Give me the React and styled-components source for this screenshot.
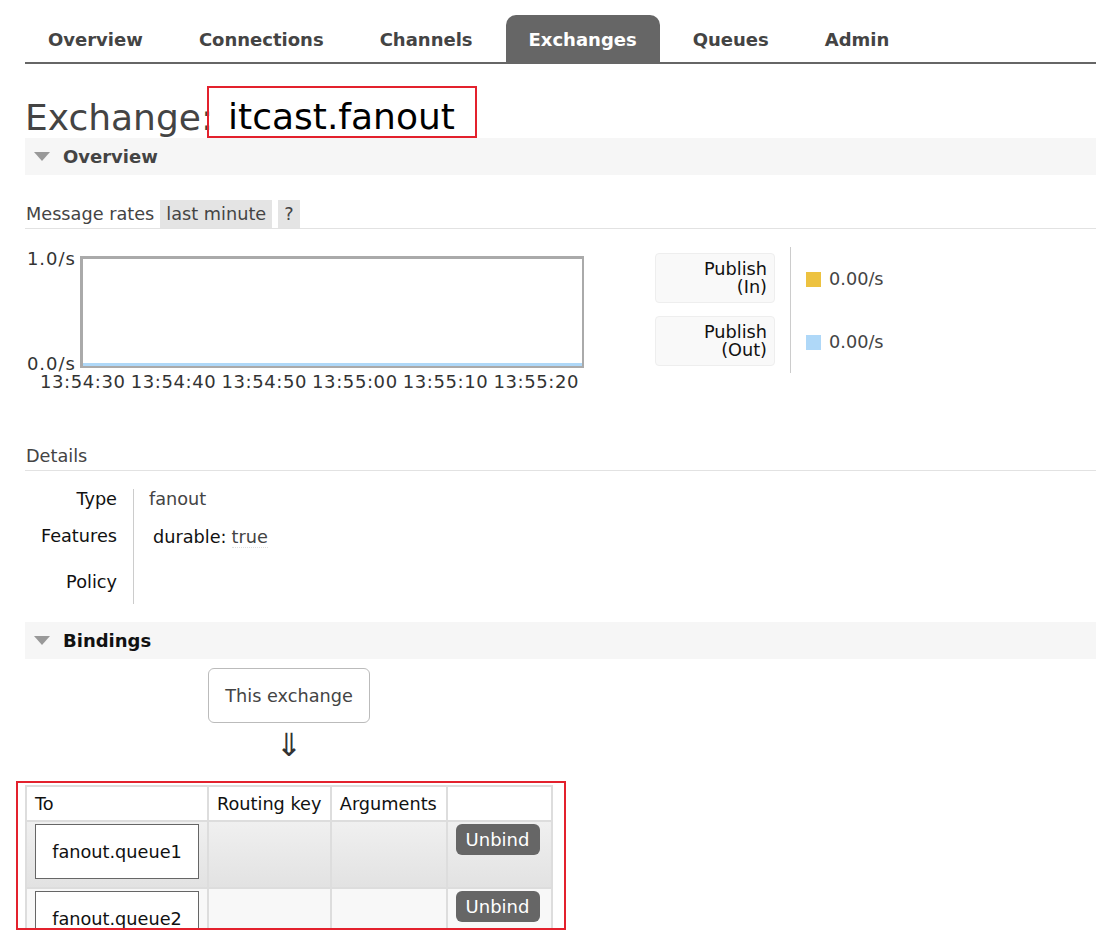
import React from 'react'
import styled, { createGlobalStyle } from 'styled-components'

const Global = createGlobalStyle`
  html, body { margin: 0; padding: 0; background: #fff; }
  body { font-family: "DejaVu Sans", Verdana, sans-serif; font-size: 17.7px; color: #444; }
  * { box-sizing: border-box; }
`

const Page = styled.div`
  padding: 15px 0 0 25px;
  width: 1096px;
  overflow: hidden;
`

const Nav = styled.ul`
  list-style: none;
  margin: 0;
  padding: 0;
  display: flex;
  border-bottom: 2px solid #666;
  height: 49px;
`

const Tab = styled.li`
  height: 47px;
  padding: 2px 23px 0;
  margin-right: 10px;
  display: flex;
  align-items: center;
  font-weight: bold;
  font-size: 18px;
  color: ${p => (p.$active ? '#fff' : '#444')};
  background: ${p => (p.$active ? '#666' : 'transparent')};
  border-radius: 10px 10px 0 0;
`

const Title = styled.h1`
  margin: 22px 0 0 0;
  font-weight: normal;
  font-size: 36px;
  color: #444;
  display: flex;
  align-items: flex-start;
  height: 52px;
`

const TitleLabel = styled.span`
  line-height: 52px;
  padding-top: 6px;
`

const Marked = styled.span`
  color: #000;
  border: 2px solid #e3212d;
  height: 52px;
  display: block;
  line-height: 52px;
  padding: 3px 20px 0 19px;
  margin-left: -6px;
`

const SectionHead = styled.div`
  background: #f6f6f6;
  height: 37px;
  display: flex;
  align-items: center;
  font-weight: bold;
  font-size: 18px;
  color: ${p => (p.$dark ? '#111' : '#444')};
  padding-left: 9px;
  margin-top: ${p => p.$top || 0}px;
`

const Triangle = styled.span`
  width: 0;
  height: 0;
  border-left: 8px solid transparent;
  border-right: 8px solid transparent;
  border-top: 9px solid #999;
  margin-right: 13px;
`

const SubHead = styled.div`
  display: flex;
  align-items: center;
  border-bottom: 1px solid #e2e2e2;
  color: #444;
  height: 30px;
  margin-top: ${p => p.$top}px;
  padding-left: 1px;
  gap: 6px;
`

const Pill = styled.span`
  background: #e4e4e4;
  height: 28px;
  display: inline-flex;
  align-items: center;
  padding: 0 6px;
`

const RatesRow = styled.div`
  display: flex;
  margin-top: 27px;
`

const ChartArea = styled.div`
  width: 560px;
  display: grid;
  grid-template-columns: 55px 505px;
  grid-template-rows: 112px auto;
`

const YAxis = styled.div`
  display: flex;
  flex-direction: column;
  justify-content: space-between;
  align-items: flex-end;
  padding-right: 4px;
  font-size: 18px;
  letter-spacing: 1px;
  color: #333;
  line-height: 16px;
  margin-top: -5px;
  margin-bottom: -4px;
`

const Plot = styled.div`
  width: 504px;
  height: 112px;
  border: 3px solid #aaa;
  border-width: 3px 2px 2px 3px;
  display: flex;
  align-items: flex-end;
  background: #fff;
`

const BaseLine = styled.div`
  width: 100%;
  height: 3px;
  background: #afd8f8;
`

const XAxis = styled.div`
  grid-column: 1 / 3;
  display: flex;
  margin-top: 4px;
  padding-left: 15px;
  font-size: 18px;
  color: #333;
  line-height: 20px;
  letter-spacing: 0.6px;
  white-space: nowrap;
`

const Tick = styled.span`
  width: 90.7px;
  flex: none;
`

const Legend = styled.div`
  margin-left: 70px;
  margin-top: -9px;
  display: flex;
  align-self: flex-start;
`

const LegendLabels = styled.div`
  display: flex;
  flex-direction: column;
  gap: 13px;
  padding: 6px 15px 0 0;
  border-right: 1px solid #ccc;
  height: 126px;
`

const LegendLabel = styled.div`
  width: 120px;
  height: 50px;
  background: #f9f9f9;
  border: 1px solid #eee;
  border-radius: 4px;
  text-align: right;
  padding: 6px 7px 0 0;
  line-height: 18px;
  color: #111;
`

const LegendValues = styled.div`
  display: flex;
  flex-direction: column;
  padding: 23px 0 0 15px;
  gap: 45px;
`

const Value = styled.div`
  display: flex;
  align-items: center;
  gap: 8px;
  color: #444;
  height: 18px;
`

const Swatch = styled.span`
  width: 15px;
  height: 15px;
  background: ${p => p.$color};
`

const Facts = styled.div`
  display: grid;
  grid-template-columns: 109px auto;
  margin-top: 18px;
  width: 400px;
`

const FactLabel = styled.div`
  text-align: right;
  padding-right: 16px;
  color: #111;
  border-right: 1px solid #ccc;
  height: ${p => p.$h}px;
  padding-top: ${p => p.$pt}px;
  line-height: 20px;
`

const FactValue = styled.div`
  padding-left: ${p => p.$pl}px;
  height: ${p => p.$h}px;
  padding-top: ${p => p.$pt}px;
  line-height: 20px;
  color: ${p => p.$c || '#444'};
`

const Dotted = styled.span`
  color: #444;
  border-bottom: 1px dotted #ddd;
  margin-left: 5px;
  display: inline-block;
  padding-top: 3px;
`

const Flow = styled.div`
  width: 528px;
  display: flex;
  flex-direction: column;
  align-items: center;
`

const ExBox = styled.div`
  margin-top: 9px;
  width: 162px;
  height: 55px;
  border: 1px solid #bbb;
  border-radius: 6px;
  display: flex;
  align-items: center;
  justify-content: center;
  color: #444;
`

const Arrow = styled.div`
  font-size: 32px;
  line-height: 40px;
  color: #333;
  margin-top: 2px;
`

const Annot = styled.div`
  margin: 16px 0 0 -9px;
  width: 550px;
  height: 149px;
  border: 2px solid #e3212d;
  padding: 2px 0 0 7px;
  overflow: hidden;
`

const Table = styled.table`
  border-collapse: collapse;
  width: 528px;
  color: #111;
  white-space: nowrap;
`

const Th = styled.th`
  font-weight: normal;
  text-align: left;
  border: 2px solid #ddd;
  height: 35px;
  padding: 0 8px;
  width: ${p => p.$w}px;
`

const Tr = styled.tr`
  background: ${p => (p.$alt ? 'linear-gradient(#f0f0f0, #e2e2e2)' : '#f8f8f8')};
`

const Td = styled.td`
  border: 2px solid #ddd;
  height: 67px;
  vertical-align: top;
  padding: 2px 8px;
`

const QueueBox = styled.div`
  width: 164px;
  height: 55px;
  background: #fff;
  border: 1px solid #666;
  display: flex;
  align-items: center;
  justify-content: center;
  color: #111;
`

const Unbind = styled.button`
  background: #666;
  color: #fff;
  border: none;
  border-radius: 6px;
  font-family: inherit;
  font-size: 18px;
  height: 31px;
  width: 84px;
  padding: 0;
`

export default function App() {
  const tabs = ['Overview', 'Connections', 'Channels', 'Exchanges', 'Queues', 'Admin']
  const ticks = ['13:54:30', '13:54:40', '13:54:50', '13:55:00', '13:55:10', '13:55:20']
  return (
    <>
      <Global />
      <Page>
        <Nav>
          {tabs.map(t => (
            <Tab key={t} $active={t === 'Exchanges'}>{t}</Tab>
          ))}
        </Nav>
        <Title>
          <TitleLabel>Exchange:</TitleLabel>
          <Marked>itcast.fanout</Marked>
        </Title>
        <SectionHead><Triangle />Overview</SectionHead>
        <SubHead $top={24}>
          Message rates
          <Pill>last minute</Pill>
          <Pill>?</Pill>
        </SubHead>
        <RatesRow>
          <ChartArea>
            <YAxis><span>1.0/s</span><span>0.0/s</span></YAxis>
            <Plot><BaseLine /></Plot>
            <XAxis>
              {ticks.map(t => <Tick key={t}>{t}</Tick>)}
            </XAxis>
          </ChartArea>
          <Legend>
            <LegendLabels>
              <LegendLabel>Publish<br />(In)</LegendLabel>
              <LegendLabel>Publish<br />(Out)</LegendLabel>
            </LegendLabels>
            <LegendValues>
              <Value><Swatch $color="#edc240" />0.00/s</Value>
              <Value><Swatch $color="#afd8f8" />0.00/s</Value>
            </LegendValues>
          </Legend>
        </RatesRow>
        <SubHead $top={49}>Details</SubHead>
        <Facts>
          <FactLabel $h={30} $pt={0}>Type</FactLabel>
          <FactValue $h={30} $pt={0} $pl={15}>fanout</FactValue>
          <FactLabel $h={42} $pt={7}>Features</FactLabel>
          <FactValue $h={42} $pt={5} $pl={19} $c="#111">durable:<Dotted>true</Dotted></FactValue>
          <FactLabel $h={43} $pt={11}>Policy</FactLabel>
          <FactValue $h={43} $pt={11} $pl={15} />
        </Facts>
        <SectionHead $top={18} $dark><Triangle />Bindings</SectionHead>
        <Flow>
          <ExBox>This exchange</ExBox>
          <Arrow>⇓</Arrow>
        </Flow>
        <Annot>
          <Table>
            <thead>
              <tr>
                <Th $w={182}>To</Th>
                <Th $w={123}>Routing key</Th>
                <Th $w={116}>Arguments</Th>
                <Th $w={107}></Th>
              </tr>
            </thead>
            <tbody>
              <Tr $alt>
                <Td><QueueBox>fanout.queue1</QueueBox></Td>
                <Td />
                <Td />
                <Td><Unbind>Unbind</Unbind></Td>
              </Tr>
              <Tr>
                <Td><QueueBox>fanout.queue2</QueueBox></Td>
                <Td />
                <Td />
                <Td><Unbind>Unbind</Unbind></Td>
              </Tr>
            </tbody>
          </Table>
        </Annot>
      </Page>
    </>
  )
}
